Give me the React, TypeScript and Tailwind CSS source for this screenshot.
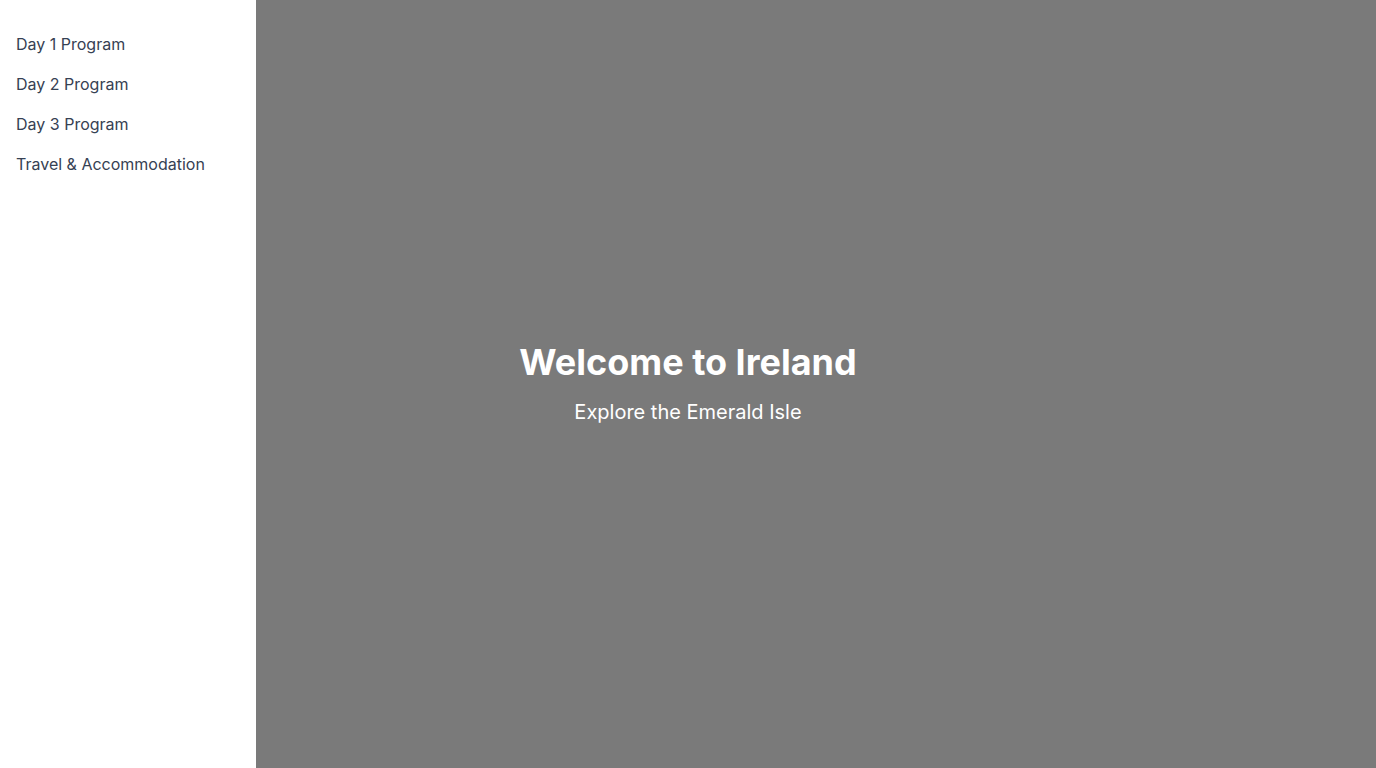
const links = ["Day 1 Program", "Day 2 Program", "Day 3 Program", "Travel & Accommodation"];

export default function App() {
  return (
    <div className="relative h-screen w-full font-['Inter',sans-serif]">
      <section className="flex h-full w-full flex-col items-center justify-center bg-[#7a7a7a] text-white">
        <h1 className="mb-4 text-4xl font-bold">Welcome to Ireland</h1>
        <p className="text-xl">Explore the Emerald Isle</p>
      </section>
      <aside className="absolute inset-y-0 left-0 w-64 bg-white px-4 pt-6">
        <nav className="flex flex-col">
          {links.map((l) => (
            <a key={l} href="#" className="py-2 text-base text-gray-700">
              {l}
            </a>
          ))}
        </nav>
      </aside>
    </div>
  );
}
